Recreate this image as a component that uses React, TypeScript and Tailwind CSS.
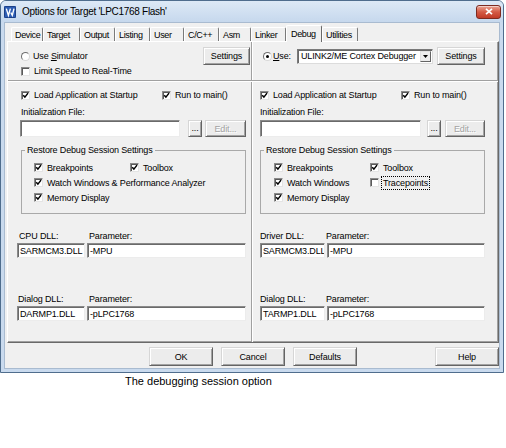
import React from "react";

const T = "text-[9px] leading-[12px] tracking-[-0.15px]";

function Check({ on }: { on?: boolean }) {
  return (
    <span className="flex h-[9px] w-[9px] shrink-0 items-center justify-center border border-t-[#8a8a8a] border-l-[#8a8a8a] border-b-[#e4e4e4] border-r-[#e4e4e4] bg-white shadow-[inset_1px_1px_0_#5a5a5a]">
      {on && (
        <svg width="7" height="7" viewBox="0 0 7 7">
          <path d="M1.2 3.2 L2.9 5.1 L6 1.1" fill="none" stroke="#000" strokeWidth="1.5" />
        </svg>
      )}
    </span>
  );
}

function Radio({ on }: { on?: boolean }) {
  return (
    <span className="flex h-[9px] w-[9px] shrink-0 items-center justify-center rounded-full border border-t-[#6f6f6f] border-l-[#6f6f6f] border-b-[#d8d8d8] border-r-[#d8d8d8] bg-white">
      {on && <span className="h-[3px] w-[3px] rounded-full bg-black" />}
    </span>
  );
}

function Btn({
  children,
  className = "",
  disabled,
}: {
  children?: React.ReactNode;
  className?: string;
  disabled?: boolean;
}) {
  return (
    <div
      className={`flex shrink-0 items-center justify-center border border-t-[#d6d6d6] border-l-[#d6d6d6] border-b-[#646464] border-r-[#646464] bg-[#ececec] shadow-[inset_1px_1px_0_#ffffff,inset_-1px_-1px_0_#a3a3a3] whitespace-nowrap ${T} ${
        disabled ? "text-[#a3a3a3] [text-shadow:1px_1px_0_#ffffff]" : "text-black"
      } ${className}`}
    >
      {children}
    </div>
  );
}

function Field({ children, className = "" }: { children?: React.ReactNode; className?: string }) {
  return (
    <div
      className={`flex shrink-0 items-center overflow-hidden whitespace-nowrap border border-t-[#8a8a8a] border-l-[#8a8a8a] border-b-[#ececec] border-r-[#ececec] bg-white pl-[2px] shadow-[inset_1px_1px_0_#6a6a6a] ${T} ${className}`}
    >
      {children}
    </div>
  );
}

function CheckItem({ on, label, className = "" }: { on?: boolean; label: React.ReactNode; className?: string }) {
  return (
    <div className={`flex items-center gap-[4px] ${className}`}>
      <Check on={on} />
      <span className="whitespace-nowrap">{label}</span>
    </div>
  );
}

const tabs: { label: string; w: string; sel?: boolean }[] = [
  { label: "Device", w: "w-[32px]" },
  { label: "Target", w: "w-[37px]" },
  { label: "Output", w: "w-[35px]" },
  { label: "Listing", w: "w-[35px]" },
  { label: "User", w: "w-[34px]" },
  { label: "C/C++", w: "w-[35px]" },
  { label: "Asm", w: "w-[32px]" },
  { label: "Linker", w: "w-[35px]" },
  { label: "Debug", w: "w-[36px]", sel: true },
  { label: "Utilities", w: "w-[36px]" },
];

function BottomSection({ right }: { right?: boolean }) {
  return (
    <div className={`flex flex-col pt-[7px] ${right ? "flex-1" : "w-[243px]"}`}>
      <div className="flex h-[12px] items-center">
        <CheckItem
          on
          label="Load Application at Startup"
          className={right ? "ml-[7px] w-[141px]" : "ml-[13px] w-[141px]"}
        />
        <CheckItem on label="Run to main()" />
      </div>
      <div className={`mt-[5px] h-[12px] ${right ? "ml-[7px]" : "ml-[13px]"}`}>Initialization File:</div>
      <div className={`mt-[2px] flex h-[17px] ${right ? "ml-[7px]" : "ml-[12px]"}`}>
        <Field className={right ? "h-[17px] w-[161px]" : "h-[17px] w-[160px]"} />
        <Btn className={right ? "ml-[6px] h-[17px] w-[14px] items-end pb-[2px]" : "ml-[8px] h-[17px] w-[14px] items-end pb-[2px]"}>
          ...
        </Btn>
        <Btn disabled className={right ? "ml-[4px] h-[17px] w-[40px]" : "ml-[3px] h-[17px] w-[41px]"}>
          Edit...
        </Btn>
      </div>
      <fieldset
        className={`mt-[7px] w-[225px] border border-[#a9a9a9] pb-[8px] pt-[4px] ${right ? "ml-[7px] pl-[13px]" : "ml-[13px] pl-[12px]"}`}
      >
        <legend className={`px-[2px] leading-[12px] ${right ? "-ml-[10px]" : "-ml-[9px]"}`}>
          Restore Debug Session Settings
        </legend>
        <div className="flex h-[15px] items-center">
          <CheckItem on label="Breakpoints" className="w-[96px]" />
          <CheckItem on label="Toolbox" />
        </div>
        {right ? (
          <div className="flex h-[15px] items-center">
            <CheckItem on label="Watch Windows" className="w-[96px]" />
            <div className="flex items-center gap-[3px]">
              <Check />
              <span className="px-[1px] outline outline-1 outline-dotted outline-black">Tracepoints</span>
            </div>
          </div>
        ) : (
          <div className="flex h-[15px] items-center">
            <CheckItem on label="Watch Windows & Performance Analyzer" />
          </div>
        )}
        <div className="flex h-[15px] items-center">
          <CheckItem on label="Memory Display" />
        </div>
      </fieldset>

      <div className="mt-[16px] flex h-[12px]">
        <span className={right ? "ml-[7px] w-[66px]" : "ml-[11px] w-[70px]"}>{right ? "Driver DLL:" : "CPU DLL:"}</span>
        <span>Parameter:</span>
      </div>
      <div className={`mt-[1px] flex h-[15px] gap-[2px] ${right ? "ml-[7px]" : "ml-[9px]"}`}>
        <Field className={right ? "h-[15px] w-[65px] tracking-[-0.3px]" : "h-[15px] w-[68px] tracking-[-0.3px]"}>SARMCM3.DLL</Field>
        <Field className={right ? "h-[15px] w-[158px]" : "h-[15px] w-[159px]"}>-MPU</Field>
      </div>

      <div className="mt-[35px] flex h-[12px]">
        <span className={right ? "ml-[7px] w-[66px]" : "ml-[10px] w-[71px]"}>Dialog DLL:</span>
        <span>Parameter:</span>
      </div>
      <div className={`mt-[1px] flex h-[15px] gap-[2px] ${right ? "ml-[7px]" : "ml-[9px]"}`}>
        <Field className={right ? "h-[15px] w-[65px]" : "h-[15px] w-[68px]"}>{right ? "TARMP1.DLL" : "DARMP1.DLL"}</Field>
        <Field className={right ? "h-[15px] w-[158px]" : "h-[15px] w-[159px]"}>-pLPC1768</Field>
      </div>
    </div>
  );
}

function VDiv() {
  return <div className="w-[2px] shrink-0 border-l border-r border-l-[#a0a0a0] border-r-white" />;
}

export default function App() {
  return (
    <div className={`h-[448px] w-[506px] bg-white font-['Liberation_Sans',Arial,sans-serif] text-black`}>
      <div className="flex w-[504px] flex-col rounded-t-[6px] border border-[#4f6d8d] bg-[#c9daee]">
        {/* title bar */}
        <div className="flex h-[21px] items-center rounded-t-[5px] bg-linear-to-b from-[#dde9f6] to-[#c6d8ed] pl-[3px] pr-[2px]">
          <svg width="12" height="12" viewBox="0 0 12 12" className="shrink-0">
            <rect x="0" y="0" width="12" height="12" rx="1" fill="#2d5db4" />
            <rect x="0.5" y="0.5" width="11" height="11" rx="1" fill="none" stroke="#1b3f86" />
            <path d="M2.3 2.6 L4.4 9.4 L6.4 2.6" fill="none" stroke="#fff" strokeWidth="1.4" />
            <path d="M6.8 6.5 L8.3 9.4 L10 2.6" fill="none" stroke="#fff" strokeWidth="1.4" />
          </svg>
          <span className="ml-[6px] whitespace-nowrap text-[10px] leading-[12px] tracking-[-0.3px] text-black">
            Options for Target 'LPC1768 Flash'
          </span>
          <div className="ml-auto flex h-[14px] w-[25px] items-center justify-center rounded-[3px] border border-[#7d2a20] bg-linear-to-b from-[#e9a393] via-[#d45a45] to-[#c13a27] shadow-[inset_0_1px_0_rgba(255,255,255,0.5)]">
            <svg width="8" height="7" viewBox="0 0 8 7">
              <path d="M1 0.8 L7 6.2 M7 0.8 L1 6.2" stroke="#fff" strokeWidth="1.7" />
            </svg>
          </div>
        </div>

        {/* client */}
        <div className={`mx-[3px] mb-[3px] flex flex-col border border-[#a9bbd0] bg-[#f0f0f0] pb-[2px] ${T}`}>
          {/* tabs */}
          <div className="ml-[6px] mt-[2px] flex h-[16px] items-end tracking-[-0.35px]">
            {tabs.map((t) =>
              t.sel ? (
                <div
                  key={t.label}
                  className={`relative z-10 -mb-px flex h-[17px] items-center rounded-t-[2px] border-l border-r border-t border-l-white border-r-[#696969] border-t-white bg-[#f0f0f0] pl-[4px] ${t.w}`}
                >
                  {t.label}
                </div>
              ) : (
                <div
                  key={t.label}
                  className={`flex h-[14px] items-center rounded-t-[2px] border-l border-r border-t border-l-white border-r-[#7a7a7a] border-t-white pl-[3px] ${t.w}`}
                >
                  {t.label}
                </div>
              )
            )}
          </div>

          {/* panel */}
          <div className="ml-[2px] flex h-[302px] w-[492px] flex-col border border-b-[#696969] border-l-white border-r-[#696969] border-t-white shadow-[inset_-1px_-1px_0_#a0a0a0]">
            <div className="flex h-[38px]">
              <div className="flex w-[243px] flex-col pt-[5px]">
                <div className="flex h-[18px] items-center">
                  <div className="ml-[13px] flex items-center gap-[3px]">
                    <Radio />
                    <span>
                      Use <u>S</u>imulator
                    </span>
                  </div>
                  <Btn className="ml-auto mr-[1px] h-[18px] w-[47px]">Settings</Btn>
                </div>
                <CheckItem label="Limit Speed to Real-Time" className="ml-[13px] h-[12px]" />
              </div>
              <VDiv />
              <div className="flex flex-1 flex-col pt-[5px]">
                <div className="flex h-[18px] items-center">
                  <div className="ml-[10px] flex w-[34px] items-center gap-[1px]">
                    <Radio on />
                    <span>
                      <u>U</u>se:
                    </span>
                  </div>
                  <div className="flex h-[15px] w-[136px] items-center border border-t-[#7a7a7a] border-l-[#7a7a7a] border-b-[#dcdcdc] border-r-[#dcdcdc] bg-white p-[1px] shadow-[inset_1px_1px_0_#6a6a6a]">
                    <span className="flex-1 overflow-hidden whitespace-nowrap pl-[2px]">ULINK2/ME Cortex Debugger</span>
                    <span className="flex h-[11px] w-[11px] items-center justify-center border border-t-[#e0e0e0] border-l-[#e0e0e0] border-b-[#646464] border-r-[#646464] bg-[#ececec]">
                      <svg width="5" height="3" viewBox="0 0 5 3">
                        <path d="M0 0 L5 0 L2.5 3 Z" fill="#000" />
                      </svg>
                    </span>
                  </div>
                  <Btn className="ml-[4px] h-[18px] w-[48px]">Settings</Btn>
                </div>
              </div>
            </div>
            <div className="h-[2px] border-b border-t border-b-white border-t-[#a0a0a0]" />
            <div className="flex flex-1">
              <BottomSection />
              <VDiv />
              <BottomSection right />
            </div>
          </div>

          {/* buttons */}
          <div className="mt-[4px] flex h-[19px]">
            <Btn className="ml-[144px] h-[19px] w-[64px]">OK</Btn>
            <Btn className="ml-[8px] h-[19px] w-[64px]">Cancel</Btn>
            <Btn className="ml-[8px] h-[19px] w-[64px]">Defaults</Btn>
            <Btn className="ml-auto h-[19px] w-[64px]">Help</Btn>
          </div>
        </div>
      </div>
      <div className="ml-[125px] mt-[2px] text-[11px] leading-[13px]">The debugging session option</div>
    </div>
  );
}
